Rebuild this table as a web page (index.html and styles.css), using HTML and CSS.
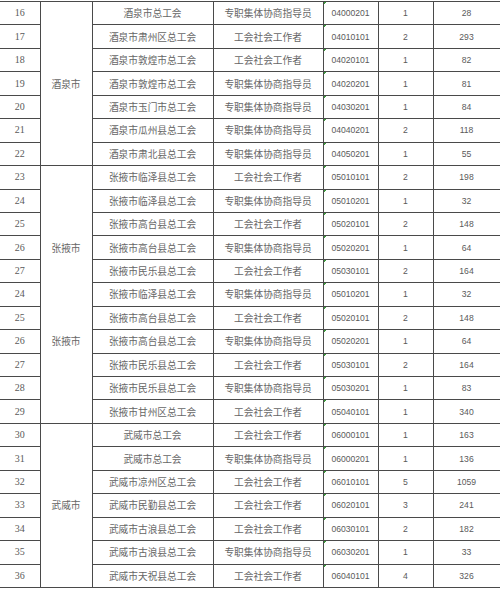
FILE: index.html
```html
<!DOCTYPE html>
<html lang="zh">
<head>
<meta charset="utf-8">
<title>岗位表</title>
<link rel="stylesheet" href="styles.css">
</head>
<body>
<table class="sheet">
<colgroup>
<col class="c-no"><col class="c-city"><col class="c-unit"><col class="c-post"><col class="c-code"><col class="c-num"><col class="c-apply">
</colgroup>
<tbody>
<tr><td class="no">16</td><td class="city" rowspan="7">酒泉市</td><td class="unit">酒泉市总工会</td><td class="post">专职集体协商指导员</td><td class="code">04000201</td><td class="num">1</td><td class="apply">28</td></tr>
<tr><td class="no">17</td><td class="unit">酒泉市肃州区总工会</td><td class="post">工会社会工作者</td><td class="code">04010101</td><td class="num">2</td><td class="apply">293</td></tr>
<tr><td class="no">18</td><td class="unit">酒泉市敦煌市总工会</td><td class="post">工会社会工作者</td><td class="code">04020101</td><td class="num">1</td><td class="apply">82</td></tr>
<tr><td class="no">19</td><td class="unit">酒泉市敦煌市总工会</td><td class="post">专职集体协商指导员</td><td class="code">04020201</td><td class="num">1</td><td class="apply">81</td></tr>
<tr><td class="no">20</td><td class="unit">酒泉市玉门市总工会</td><td class="post">专职集体协商指导员</td><td class="code">04030201</td><td class="num">1</td><td class="apply">84</td></tr>
<tr><td class="no">21</td><td class="unit">酒泉市瓜州县总工会</td><td class="post">专职集体协商指导员</td><td class="code">04040201</td><td class="num">2</td><td class="apply">118</td></tr>
<tr><td class="no">22</td><td class="unit">酒泉市肃北县总工会</td><td class="post">专职集体协商指导员</td><td class="code">04050201</td><td class="num">1</td><td class="apply">55</td></tr>
<tr><td class="no">23</td><td class="city" rowspan="11"><div class="city-stack"><span>张掖市</span><span>张掖市</span></div></td><td class="unit">张掖市临泽县总工会</td><td class="post">工会社会工作者</td><td class="code">05010101</td><td class="num">2</td><td class="apply">198</td></tr>
<tr><td class="no">24</td><td class="unit">张掖市临泽县总工会</td><td class="post">专职集体协商指导员</td><td class="code">05010201</td><td class="num">1</td><td class="apply">32</td></tr>
<tr><td class="no">25</td><td class="unit">张掖市高台县总工会</td><td class="post">工会社会工作者</td><td class="code">05020101</td><td class="num">2</td><td class="apply">148</td></tr>
<tr><td class="no">26</td><td class="unit">张掖市高台县总工会</td><td class="post">专职集体协商指导员</td><td class="code">05020201</td><td class="num">1</td><td class="apply">64</td></tr>
<tr><td class="no">27</td><td class="unit">张掖市民乐县总工会</td><td class="post">工会社会工作者</td><td class="code">05030101</td><td class="num">2</td><td class="apply">164</td></tr>
<tr><td class="no">24</td><td class="unit">张掖市临泽县总工会</td><td class="post">专职集体协商指导员</td><td class="code">05010201</td><td class="num">1</td><td class="apply">32</td></tr>
<tr><td class="no">25</td><td class="unit">张掖市高台县总工会</td><td class="post">工会社会工作者</td><td class="code">05020101</td><td class="num">2</td><td class="apply">148</td></tr>
<tr><td class="no">26</td><td class="unit">张掖市高台县总工会</td><td class="post">专职集体协商指导员</td><td class="code">05020201</td><td class="num">1</td><td class="apply">64</td></tr>
<tr><td class="no">27</td><td class="unit">张掖市民乐县总工会</td><td class="post">工会社会工作者</td><td class="code">05030101</td><td class="num">2</td><td class="apply">164</td></tr>
<tr><td class="no">28</td><td class="unit">张掖市民乐县总工会</td><td class="post">专职集体协商指导员</td><td class="code">05030201</td><td class="num">1</td><td class="apply">83</td></tr>
<tr><td class="no">29</td><td class="unit">张掖市甘州区总工会</td><td class="post">工会社会工作者</td><td class="code">05040101</td><td class="num">1</td><td class="apply">340</td></tr>
<tr><td class="no">30</td><td class="city" rowspan="7">武威市</td><td class="unit">武威市总工会</td><td class="post">工会社会工作者</td><td class="code">06000101</td><td class="num">1</td><td class="apply">163</td></tr>
<tr><td class="no">31</td><td class="unit">武威市总工会</td><td class="post">专职集体协商指导员</td><td class="code">06000201</td><td class="num">1</td><td class="apply">136</td></tr>
<tr><td class="no">32</td><td class="unit">武威市凉州区总工会</td><td class="post">工会社会工作者</td><td class="code">06010101</td><td class="num">5</td><td class="apply">1059</td></tr>
<tr><td class="no">33</td><td class="unit">武威市民勤县总工会</td><td class="post">工会社会工作者</td><td class="code">06020101</td><td class="num">3</td><td class="apply">241</td></tr>
<tr><td class="no">34</td><td class="unit">武威市古浪县总工会</td><td class="post">工会社会工作者</td><td class="code">06030101</td><td class="num">2</td><td class="apply">182</td></tr>
<tr><td class="no">35</td><td class="unit">武威市古浪县总工会</td><td class="post">专职集体协商指导员</td><td class="code">06030201</td><td class="num">1</td><td class="apply">33</td></tr>
<tr><td class="no">36</td><td class="unit">武威市天祝县总工会</td><td class="post">工会社会工作者</td><td class="code">06040101</td><td class="num">4</td><td class="apply">326</td></tr>
</tbody>
</table>
</body>
</html>
```

FILE: styles.css
```css
html, body {
  margin: 0;
  padding: 0;
  background: #ffffff;
  overflow: hidden;
}

.sheet {
  margin-top: 1px;
  width: 500px;
  table-layout: fixed;
  border-collapse: collapse;
  color: #5a5a5a;
}

.c-no { width: 40px; }
.c-city { width: 52px; }
.c-unit { width: 121px; }
.c-post { width: 110px; }
.c-code { width: 55px; }
.c-num { width: 55px; }
.c-apply { width: 67px; }

.sheet tr { height: 23.45px; }

.sheet td {
  padding: 0;
  text-align: center;
  vertical-align: middle;
  border: 1px solid #4a4a4a;
  white-space: nowrap;
  overflow: hidden;
  line-height: 12px;
}

.sheet td.no {
  border-left: none;
  font-family: "Liberation Serif", "DejaVu Serif", serif;
  font-size: 10px;
}

.sheet td.city,
.sheet td.unit,
.sheet td.post {
  font-family: "Noto Sans CJK SC", "Noto Sans", sans-serif;
  font-size: 9.7px;
  color: #666666;
}

.sheet td.post {
  border-left-color: #a8a8a8;
}

.sheet td.code {
  font-family: "Liberation Sans", Arial, sans-serif;
  font-size: 8.6px;
  border-left-color: #6a6a6a;
  background: linear-gradient(135deg, #3c9a3c 2px, transparent 2px) no-repeat;
}

.sheet td.num,
.sheet td.apply {
  font-family: "Liberation Sans", Arial, sans-serif;
  font-size: 8.6px;
  border-left-color: #7a7a7a;
}

.sheet td.apply {
  border-right: 1px solid #4a4a4a;
}

.city-stack {
  display: flex;
  flex-direction: column;
  align-items: center;
  gap: 81px;
}
```
